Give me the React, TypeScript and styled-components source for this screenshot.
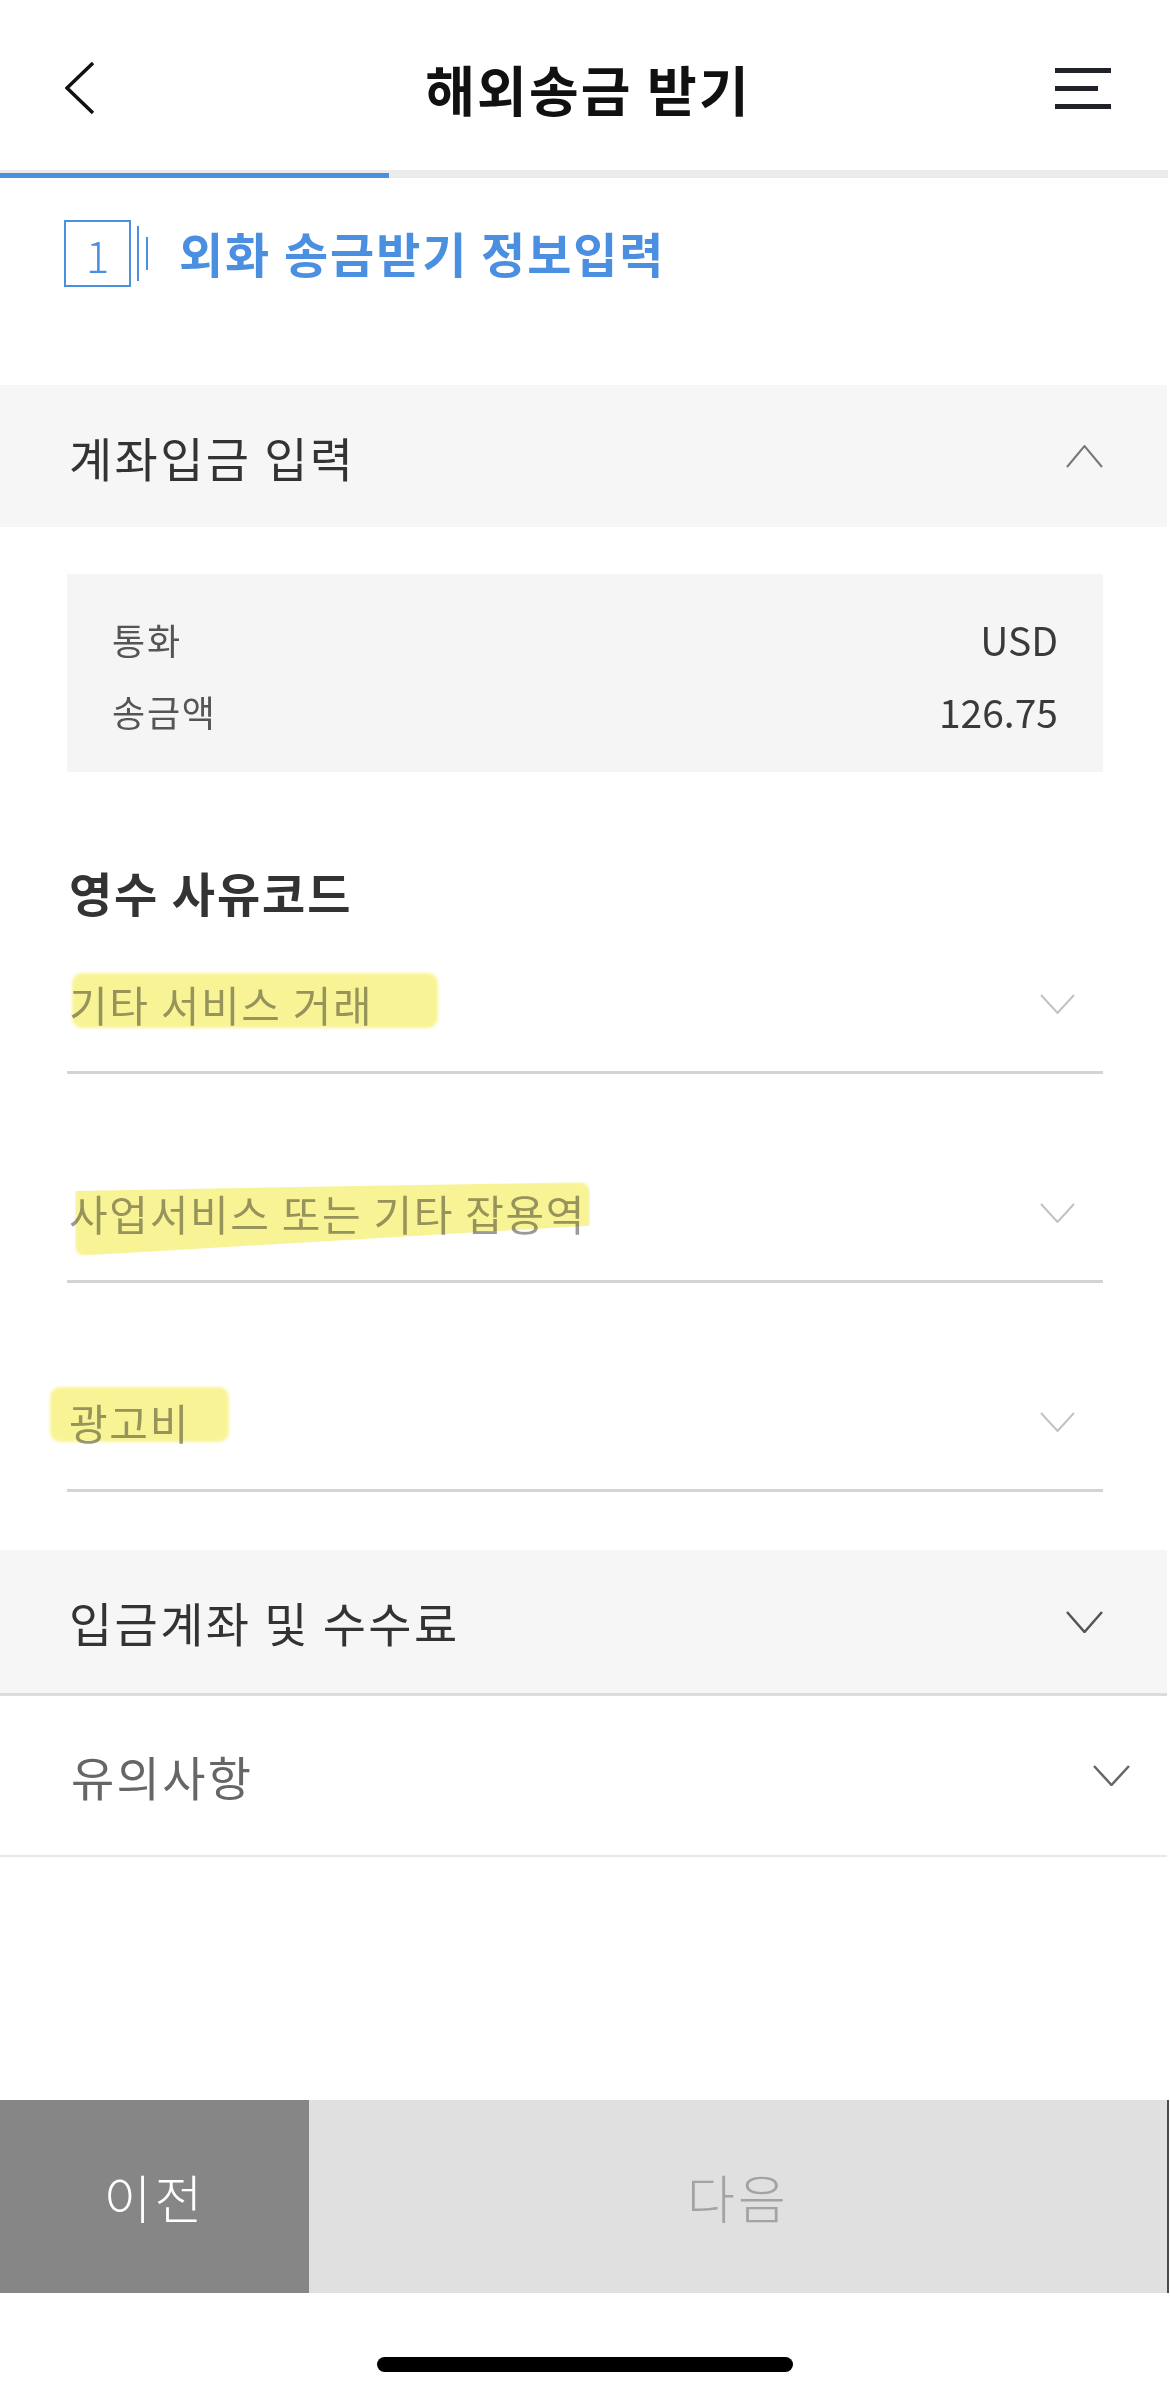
import { type ReactElement } from 'react';
import styled, { createGlobalStyle } from 'styled-components';

const GlobalStyle = createGlobalStyle`
  html, body {
    margin: 0;
    padding: 0;
    background: #ffffff;
  }
  body {
    font-family: "Noto Sans CJK KR", "Noto Sans", sans-serif;
    color: #333;
  }
  * {
    box-sizing: border-box;
  }
`;

const BLUE = '#4a8fe0';

const Page = styled.div`
  width: 1170px;
  height: 2395px;
  display: flex;
  flex-direction: column;
  overflow: hidden;
  background: #fff;
`;

const Header = styled.header`
  height: 170px;
  padding: 6px 59px 0 65px;
  display: grid;
  grid-template-columns: 1fr auto 1fr;
  align-items: center;
`;

const IconButton = styled.button<{ $end?: boolean }>`
  justify-self: ${(p) => (p.$end ? 'end' : 'start')};
  border: 0;
  padding: 0;
  background: none;
  display: flex;
  flex-direction: column;
  align-items: flex-start;
  gap: 13px;
`;

const MenuBar = styled.span<{ $w: number }>`
  display: block;
  width: ${(p) => p.$w}px;
  height: 5px;
  background: #1f2329;
`;

const Title = styled.h1`
  margin: 0;
  font-size: 54px;
  font-weight: 700;
  color: #111;
  letter-spacing: 0.04em;
`;

const Progress = styled.div`
  height: 8px;
  margin-right: 2px;
  background: #ebebeb;
  display: flex;
  align-items: flex-end;
`;

const ProgressFill = styled.div`
  height: 5px;
  background: ${BLUE};
`;

const Step = styled.div`
  margin-top: 42px;
  height: 67px;
  padding-left: 64px;
  display: flex;
  align-items: center;
`;

const StepBox = styled.div`
  width: 67px;
  height: 67px;
  border: 2px solid ${BLUE};
  color: ${BLUE};
  font-size: 44px;
  font-weight: 300;
  display: flex;
  align-items: center;
  justify-content: center;
  line-height: 1;
`;

const StepLine = styled.span<{ $h: number; $gap: number }>`
  width: 2px;
  height: ${(p) => p.$h}px;
  margin-left: ${(p) => p.$gap}px;
  background: ${BLUE};
`;

const StepTitle = styled.h2`
  margin: 0 0 4px 31px;
  font-size: 48px;
  line-height: 60px;
  font-weight: 700;
  color: ${BLUE};
  letter-spacing: 0.04em;
`;

const SectionHead = styled.div<{ $mt: number; $border?: boolean; $color: string }>`
  margin-top: ${(p) => p.$mt}px;
  margin-right: 3px;
  height: ${(p) => (p.$border ? 146 : 142)}px;
  padding: 0 64px 0 69px;
  background: #f6f6f6;
  border-bottom: ${(p) => (p.$border ? '3px solid #dcdcdc' : '0')};
  display: flex;
  align-items: center;
  justify-content: space-between;
  font-size: 47px;
  letter-spacing: 0.05em;
  color: ${(p) => p.$color};
`;

const Body = styled.div`
  padding: 0 67px 0 67px;
`;

const InfoBox = styled.div`
  margin-top: 47px;
  padding: 29px 45px 25px 45px;
  background: #f5f5f5;
`;

const InfoRow = styled.div`
  height: 72px;
  display: flex;
  align-items: center;
  justify-content: space-between;
`;

const InfoLabel = styled.span`
  font-size: 36px;
  letter-spacing: 0.05em;
  color: #555;
`;

const InfoValue = styled.span`
  font-size: 39px;
  color: #3a3a3a;
`;

const FieldTitle = styled.h3`
  margin: 90px 0 0 0;
  padding-left: 2px;
  line-height: 60px;
  font-size: 47px;
  font-weight: 700;
  letter-spacing: 0.04em;
  color: #333;
`;

const SelectList = styled.div`
  margin-top: 15px;
  display: flex;
  flex-direction: column;
  gap: 72px;
`;

const SelectRow = styled.div`
  height: 137px;
  border-bottom: 3px solid #d4d4d4;
  padding: 0 28px 0 2px;
  display: flex;
  align-items: center;
  justify-content: space-between;
`;

const Option = styled.span`
  position: relative;
  display: inline-block;
  font-size: 42px;
  line-height: 48px;
  letter-spacing: 0.04em;
  color: #9a9a9a;
`;

const Marker = styled.span<{
  $left: number;
  $top: number;
  $w: number;
  $h: number;
  $clip?: string;
}>`
  position: absolute;
  left: ${(p) => p.$left}px;
  top: ${(p) => p.$top}px;
  width: ${(p) => p.$w}px;
  height: ${(p) => p.$h}px;
  background: rgb(248, 244, 150);
  border-radius: 10px;
  mix-blend-mode: multiply;
  filter: blur(1.5px);
  clip-path: ${(p) => p.$clip ?? 'none'};
`;

const PlainRow = styled.div`
  height: 161px;
  border-bottom: 2px solid #e8e8e8;
  margin-right: 3px;
  padding: 0 37px 0 71px;
  display: flex;
  align-items: center;
  justify-content: space-between;
  font-size: 47px;
  letter-spacing: 0.05em;
  color: #666;
`;

const ButtonBar = styled.div`
  margin-top: auto;
  width: 1169px;
  height: 193px;
  display: flex;
`;

const NavButton = styled.button<{ $primary?: boolean }>`
  border: 0;
  font-family: inherit;
  font-size: 52px;
  font-weight: 300;
  letter-spacing: 0.06em;
  flex: ${(p) => (p.$primary ? '1' : '0 0 309px')};
  background: ${(p) => (p.$primary ? '#e0e0e0' : '#868686')};
  color: ${(p) => (p.$primary ? '#a3a3a3' : '#ffffff')};
  border-right: ${(p) => (p.$primary ? '2px solid #4a4a4a' : '0')};
`;

const HomeArea = styled.div`
  height: 102px;
  padding-top: 64px;
  display: flex;
  justify-content: center;
`;

const HomeBar = styled.span`
  width: 416px;
  height: 15px;
  border-radius: 8px;
  background: #000;
`;

type ChevronProps = { w: number; h: number; color: string; up?: boolean; stroke?: number };

function Chevron({ w, h, color, up, stroke = 2 }: ChevronProps): ReactElement {
  const pts = up
    ? `1,${h - 1} ${w / 2},1 ${w - 1},${h - 1}`
    : `1,1 ${w / 2},${h - 1} ${w - 1},1`;
  return (
    <svg width={w} height={h} viewBox={`0 0 ${w} ${h}`}>
      <polyline points={pts} fill="none" stroke={color} strokeWidth={stroke} />
    </svg>
  );
}

const options = [
  { text: '기타 서비스 거래', mark: { left: 3, top: -7, w: 366, h: 55 } },
  {
    text: '사업서비스 또는 기타 잡용역',
    mark: { left: 6, top: -7, w: 515, h: 74, clip: 'polygon(0 12%, 100% 0, 100% 59%, 0 100%)' },
  },
  { text: '광고비', mark: { left: -19, top: -11, w: 179, h: 55 } },
];

export default function App(): ReactElement {
  const step = 1;
  const steps = 3;
  return (
    <>
      <GlobalStyle />
      <Page>
        <Header>
          <IconButton aria-label="뒤로">
            <svg width="30" height="52" viewBox="0 0 30 52">
              <polyline points="28,1 2,26 28,51" fill="none" stroke="#111" strokeWidth="3.5" />
            </svg>
          </IconButton>
          <Title>해외송금 받기</Title>
          <IconButton $end aria-label="메뉴">
            <MenuBar $w={56} />
            <MenuBar $w={43} />
            <MenuBar $w={56} />
          </IconButton>
        </Header>
        <Progress>
          <ProgressFill style={{ width: `${(step / steps) * 100}%` }} />
        </Progress>

        <Step>
          <StepBox>1</StepBox>
          <StepLine $h={55} $gap={6} />
          <StepLine $h={33} $gap={7} />
          <StepTitle>외화 송금받기 정보입력</StepTitle>
        </Step>

        <SectionHead $mt={98} $color="#333">
          계좌입금 입력
          <Chevron w={37} h={23} color="#777" up />
        </SectionHead>

        <Body>
          <InfoBox>
            <InfoRow>
              <InfoLabel>통화</InfoLabel>
              <InfoValue>USD</InfoValue>
            </InfoRow>
            <InfoRow>
              <InfoLabel>송금액</InfoLabel>
              <InfoValue>126.75</InfoValue>
            </InfoRow>
          </InfoBox>

          <FieldTitle>영수 사유코드</FieldTitle>
          <SelectList>
            {options.map((o) => (
              <SelectRow key={o.text}>
                <Option>
                  {o.text}
                  <Marker
                    $left={o.mark.left}
                    $top={o.mark.top}
                    $w={o.mark.w}
                    $h={o.mark.h}
                    $clip={o.mark.clip}
                  />
                </Option>
                <Chevron w={35} h={20} color="#c2c2c2" />
              </SelectRow>
            ))}
          </SelectList>
        </Body>

        <SectionHead $mt={58} $border $color="#333">
          입금계좌 및 수수료
          <Chevron w={37} h={22} color="#555" stroke={2.5} />
        </SectionHead>
        <PlainRow>
          유의사항
          <Chevron w={37} h={21} color="#666" stroke={2.5} />
        </PlainRow>

        <ButtonBar>
          <NavButton>이전</NavButton>
          <NavButton $primary>다음</NavButton>
        </ButtonBar>
        <HomeArea>
          <HomeBar />
        </HomeArea>
      </Page>
    </>
  );
}
